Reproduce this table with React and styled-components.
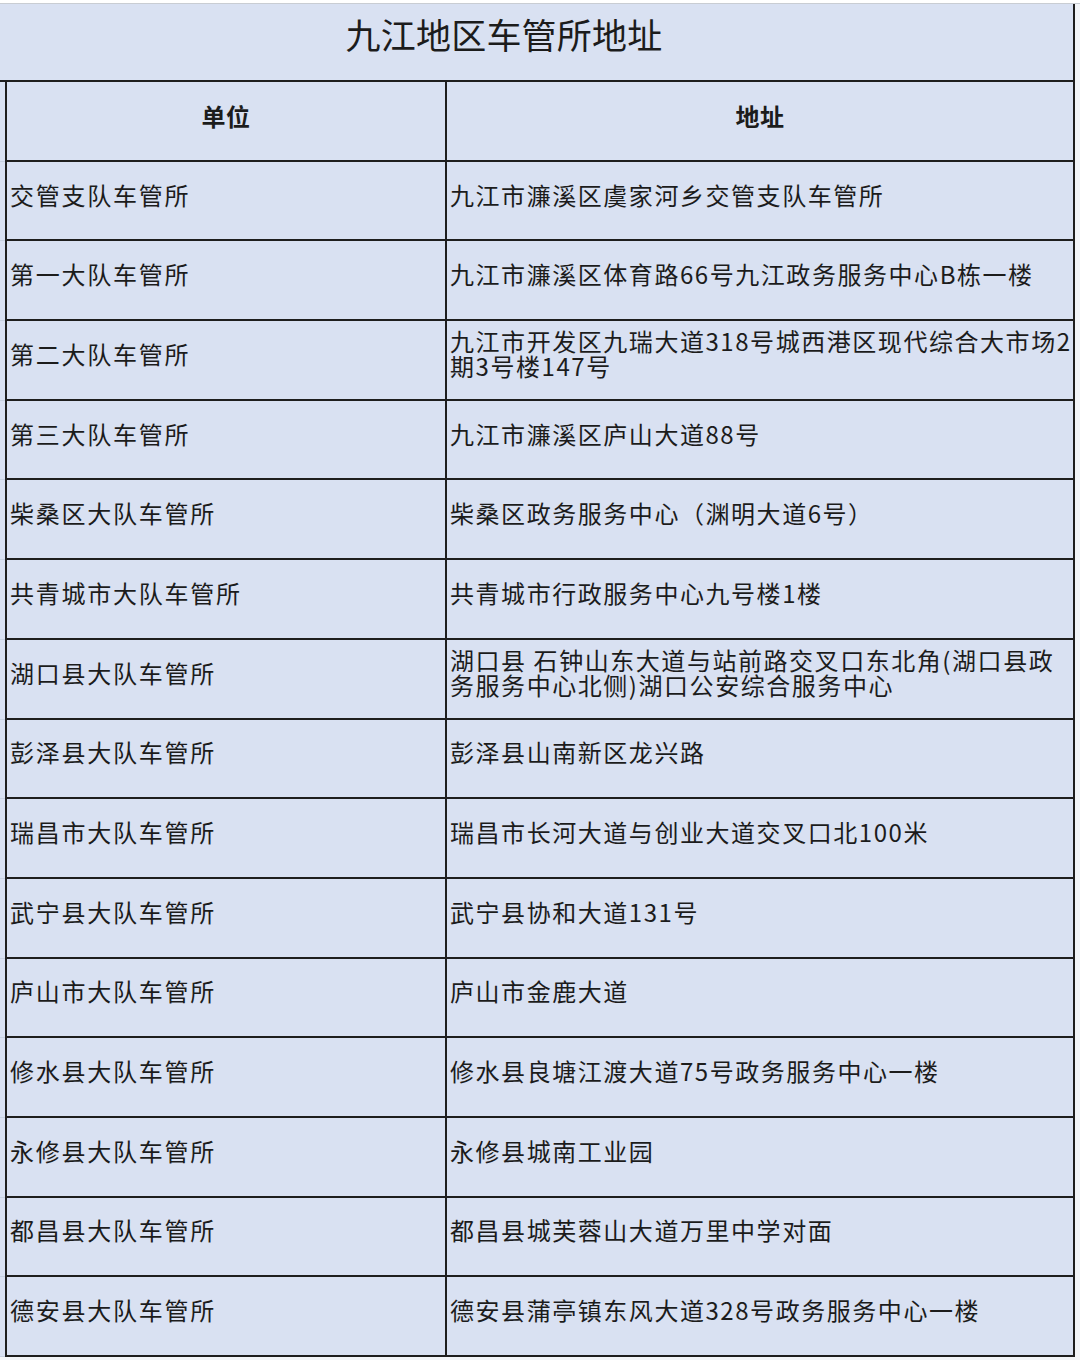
import React from "react";
import styled, { createGlobalStyle } from "styled-components";

const GlobalStyle = createGlobalStyle`
  html, body { margin: 0; padding: 0; background: #ffffff; }
  body { font-family: "Noto Sans CJK SC", "Noto Sans", sans-serif; color: #1c1c1c; }
  * { box-sizing: border-box; }
`;

const BLUE = "#d9e1f2";
const LINE = "#1e1e1e";

const Page = styled.div`
  width: 1080px;
  height: 1360px;
  display: flex;
  flex-direction: column;
  background: #f3f5f8;
  overflow: hidden;
`;

const TopStrip = styled.div`
  height: 4px;
  background: #ffffff;
  border-bottom: 1px solid #c9cdd3;
`;

const TitleRow = styled.div`
  width: 1075px;
  height: 78px;
  background: ${BLUE};
  border-right: 2px solid ${LINE};
  border-bottom: 2px solid ${LINE};
  display: flex;
  align-items: center;
  justify-content: center;
  padding: 0 65px 18px 0;
  font-size: 35px;
  letter-spacing: 0.2px;
  font-weight: 400;
`;

const Row = styled.div`
  width: 1075px;
  height: 79.7px;
  display: grid;
  grid-template-columns: 5px 442px 628px;
  background: ${BLUE};
`;

const Gutter = styled.div`
  border-bottom: 1px solid #c6d0e0;
`;

const Cell = styled.div`
  border-left: ${(p) => (p.$first ? `2px solid ${LINE}` : "none")};
  border-right: 2px solid ${LINE};
  border-bottom: 2px solid ${LINE};
  display: flex;
  flex-direction: column;
  justify-content: center;
  align-items: ${(p) => (p.$head ? "center" : "flex-start")};
  padding: 0 0 ${(p) => (p.$head ? "10px" : "13px")} ${(p) => (p.$head ? "0" : "3px")};
  font-size: 24px;
  font-weight: ${(p) => (p.$head ? 700 : 400)};
  letter-spacing: ${(p) => (p.$head ? "0.5px" : p.$first ? "1.75px" : "1.55px")};
  line-height: 25px;
  white-space: nowrap;
`;

const Line = styled.span`
  display: block;
`;

const rows = [
  ["交管支队车管所", ["九江市濂溪区虞家河乡交管支队车管所"]],
  ["第一大队车管所", ["九江市濂溪区体育路66号九江政务服务中心B栋一楼"]],
  ["第二大队车管所", ["九江市开发区九瑞大道318号城西港区现代综合大市场2", "期3号楼147号"]],
  ["第三大队车管所", ["九江市濂溪区庐山大道88号"]],
  ["柴桑区大队车管所", ["柴桑区政务服务中心（渊明大道6号）"]],
  ["共青城市大队车管所", ["共青城市行政服务中心九号楼1楼"]],
  ["湖口县大队车管所", ["湖口县 石钟山东大道与站前路交叉口东北角(湖口县政", "务服务中心北侧)湖口公安综合服务中心"]],
  ["彭泽县大队车管所", ["彭泽县山南新区龙兴路"]],
  ["瑞昌市大队车管所", ["瑞昌市长河大道与创业大道交叉口北100米"]],
  ["武宁县大队车管所", ["武宁县协和大道131号"]],
  ["庐山市大队车管所", ["庐山市金鹿大道"]],
  ["修水县大队车管所", ["修水县良塘江渡大道75号政务服务中心一楼"]],
  ["永修县大队车管所", ["永修县城南工业园"]],
  ["都昌县大队车管所", ["都昌县城芙蓉山大道万里中学对面"]],
  ["德安县大队车管所", ["德安县蒲亭镇东风大道328号政务服务中心一楼"]],
];

export default function App() {
  return (
    <Page>
      <GlobalStyle />
      <TopStrip />
      <TitleRow>九江地区车管所地址</TitleRow>
      <Row>
        <Gutter />
        <Cell $first $head>单位</Cell>
        <Cell $head>地址</Cell>
      </Row>
      {rows.map(([unit, addr]) => (
        <Row key={unit}>
          <Gutter />
          <Cell $first>{unit}</Cell>
          <Cell>
            {addr.map((l) => (
              <Line key={l}>{l}</Line>
            ))}
          </Cell>
        </Row>
      ))}
    </Page>
  );
}
